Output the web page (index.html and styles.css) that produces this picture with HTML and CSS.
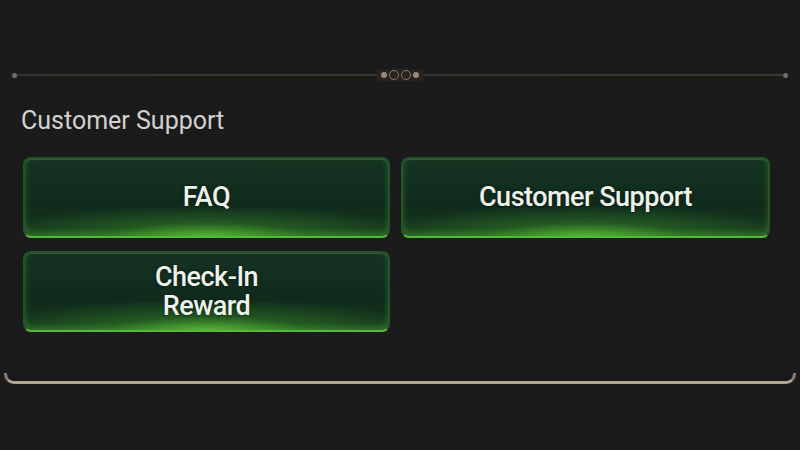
FILE: index.html
```html
<!DOCTYPE html>
<html>
<head>
  <meta charset="utf-8" />
  <title>Customer Support</title>
  <link rel="stylesheet" href="styles.css">
</head>
<body>
  <div class="panel">
    <div class="divider">
      <span class="dot"></span>
      <span class="line"></span>
      <span class="ornament">
        <i class="pip"></i><i class="ring"></i><i class="ring"></i><i class="pip"></i>
      </span>
      <span class="line"></span>
      <span class="dot"></span>
    </div>

    <h2 class="section-title">Customer Support</h2>

    <div class="actions">
      <button class="action">FAQ</button>
      <button class="action">Customer Support</button>
      <button class="action">Check-In<br>Reward</button>
    </div>

    <div class="base"></div>
  </div>
</body>
</html>
```

FILE: styles.css
```css
body {
  margin: 0;
  background: #1b1b1b;
  font-family: Roboto, "Liberation Sans", sans-serif;
  color: #d6d6d6;
  height: 450px;
  overflow: hidden;
}
.panel {
  padding: 70px 0 0 0;
  display: flex;
  flex-direction: column;
}
.divider {
  display: flex;
  align-items: center;
  height: 10px;
  margin: 0 12px;
}
.divider .line {
  flex: 1;
  height: 2px;
  background: linear-gradient(90deg, #33332b, #3a3928 50%, #3a3a2a);
}
.divider .dot {
  width: 5px;
  height: 5px;
  border-radius: 50%;
  background: #6f6f68;
}
.ornament {
  display: flex;
  align-items: center;
  gap: 2px;
  padding: 0 4px;
  height: 12px;
  background: #262220;
}
.ornament .pip {
  width: 6px;
  height: 6px;
  border-radius: 50%;
  background: #9a8a76;
}
.ornament .ring {
  width: 10px;
  height: 10px;
  border-radius: 50%;
  border: 1.5px solid #8a7c6c;
  box-sizing: border-box;
}
.section-title {
  margin: 24px 0 0 21px;
  font-size: 25px;
  font-weight: 400;
  line-height: 34px;
  color: #d2d2d2;
}
.actions {
  display: grid;
  grid-template-columns: 367px 369px;
  grid-auto-rows: 81px;
  column-gap: 11px;
  row-gap: 13px;
  margin: 19px 0 0 23px;
}
.action {
  border: 2px solid #24542a;
  border-bottom-color: #58b83a;
  border-radius: 8px;
  background:
    radial-gradient(ellipse 60% 40% at 50% 100%, rgba(100, 210, 55, 0.75), rgba(55, 140, 40, 0.4) 45%, rgba(30, 80, 30, 0) 100%),
    linear-gradient(180deg, #153322 0%, #102b1c 60%, #17391f 100%);
  box-shadow: inset 0 1px 0 rgba(120, 200, 110, 0.25), inset 0 -3px 6px rgba(90, 200, 60, 0.35);
  color: #eef2ec;
  font-family: Roboto, "Liberation Sans", sans-serif;
  font-size: 27px;
  font-weight: 500;
  line-height: 29px;
  letter-spacing: -0.5px;
  text-shadow: 0 0 3px rgba(0, 0, 0, 0.6);
  padding: 0;
  cursor: pointer;
}
.base {
  margin: 41px 4px 0 4px;
  height: 8px;
  border: 3px solid #b2a68c;
  border-top: none;
  border-left-color: #8a806c;
  border-right-color: #8a806c;
  border-radius: 0 0 10px 10px;
  background: linear-gradient(180deg, #1a1a1e, #15151c);
}
```
